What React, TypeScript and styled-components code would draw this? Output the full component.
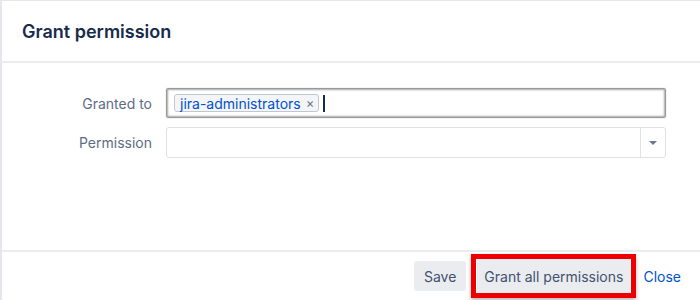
import React from "react";
import styled, { createGlobalStyle } from "styled-components";

const Global = createGlobalStyle`
  html, body { margin: 0; padding: 0; background: #fff; }
  body { font-family: Inter, "Liberation Sans", Arial, sans-serif; -webkit-font-smoothing: antialiased; }
  * { box-sizing: border-box; }
`;

const Dialog = styled.div`
  width: 700px;
  height: 300px;
  border-top: 1px solid #e6e7ec;
  border-left: 2px solid #e6e7ec;
  display: flex;
  flex-direction: column;
  background: #fff;
`;

const Header = styled.div`
  height: 62px;
  flex: none;
  display: flex;
  align-items: center;
  padding: 0 0 0 20px;
  border-bottom: 2px solid #ebecf0;
`;

const Title = styled.h2`
  margin: 0;
  font-size: 18px;
  font-weight: 600;
  color: #172b4d;
`;

const Body = styled.div`
  flex: 1;
  padding: 25px 0 0 0;
  display: grid;
  grid-template-columns: 150px 500px;
  column-gap: 14px;
  row-gap: 9px;
  align-content: start;
`;

const Label = styled.label`
  text-align: right;
  font-size: 14px;
  color: #5e6c84;
  align-self: center;
`;

const TagInput = styled.div`
  height: 30px;
  border: 1px solid #999;
  border-radius: 2px;
  box-shadow: inset 0 0 2px 1px #a8a8a8, 0 0 1px #999;
  display: flex;
  align-items: center;
  padding: 0 7px;
  gap: 4px;
`;

const Tag = styled.span`
  display: inline-flex;
  align-items: center;
  height: 18px;
  padding: 0 4px 0 5px;
  gap: 5px;
  border: 1px solid #c1c7d0;
  border-radius: 3px;
  background: #f4f5f7;
  color: #0052cc;
  font-size: 14px;
`;

const Remove = styled.span`
  color: #6b778c;
  font-size: 13px;
  line-height: 1;
`;

const Caret = styled.span`
  width: 1.5px;
  height: 17px;
  background: #172b4d;
`;

const Select = styled.div`
  height: 31px;
  border: 1px solid #dfe1e6;
  border-radius: 3px;
  display: flex;
  justify-content: flex-end;
`;

const Arrow = styled.div`
  width: 25px;
  border-left: 1px solid #dfe1e6;
  display: flex;
  align-items: center;
  justify-content: center;
  &::after {
    content: "";
    border-left: 4px solid transparent;
    border-right: 4px solid transparent;
    border-top: 4px solid #6b778c;
  }
`;

const Footer = styled.div`
  height: 50px;
  flex: none;
  border-top: 2px solid #ebecf0;
  display: flex;
  align-items: center;
  justify-content: flex-end;
  padding: 0 19px 0 0;
  gap: 11px;
`;

const Button = styled.button<{ $highlight?: boolean }>`
  position: relative;
  font-family: inherit;
  font-size: 14px;
  color: #42526e;
  background: #ebecf0;
  border: none;
  border-radius: 3px;
  height: 30px;
  padding: 0 10px;
  cursor: pointer;
  ${(p) =>
    p.$highlight &&
    `
    height: 34px;
    padding: 1px 7px 0;
    border-radius: 0;
    margin-right: 2px;
    &::after {
      content: "";
      position: absolute;
      inset: -5px -6px -5px -6px;
      border: 5px solid #ee0000;
      box-shadow: 0 2px 4px rgba(0,0,0,0.3);
      pointer-events: none;
    }
  `}
`;

const CloseLink = styled.a`
  font-size: 14px;
  color: #0052cc;
  text-decoration: none;
`;

export default function App() {
  return (
    <>
      <Global />
      <Dialog>
        <Header>
          <Title>Grant permission</Title>
        </Header>
        <Body>
          <Label>Granted to</Label>
          <TagInput>
            <Tag>
              jira-administrators <Remove>×</Remove>
            </Tag>
            <Caret />
          </TagInput>
          <Label>Permission</Label>
          <Select>
            <Arrow />
          </Select>
        </Body>
        <Footer>
          <Button>Save</Button>
          <Button $highlight>Grant all permissions</Button>
          <CloseLink href="#">Close</CloseLink>
        </Footer>
      </Dialog>
    </>
  );
}
